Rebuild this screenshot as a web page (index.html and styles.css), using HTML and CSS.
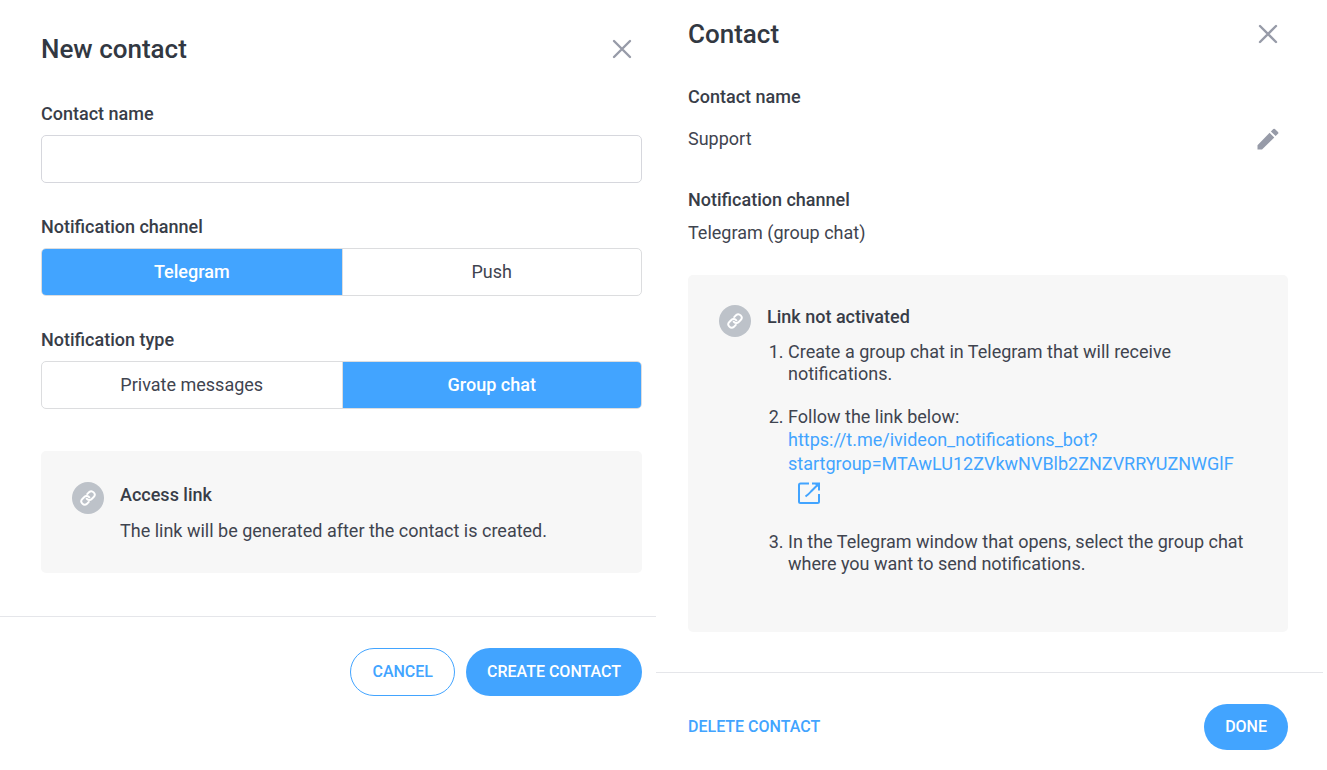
FILE: index.html
```html
<!DOCTYPE html>
<html lang="en">
<head>
<meta charset="utf-8">
<title>Contacts</title>
<link rel="stylesheet" href="styles.css">
</head>
<body>
<svg class="sprite" aria-hidden="true">
  <symbol id="icon-close" viewBox="0 0 24 24">
    <path d="M4 4 20 20M20 4 4 20" fill="none" stroke="currentColor" stroke-width="2.400" stroke-linecap="round"/>
  </symbol>
  <symbol id="icon-link" viewBox="0 0 24 24">
    <path d="M10 13a5 5 0 0 0 7.540.540l3-3a5 5 0 0 0-7.070-7.070l-2.700 2.700M14 11a5 5 0 0 0-7.540-.540l-3 3a5 5 0 0 0 7.070 7.070l2.700-2.700" fill="none" stroke="currentColor" stroke-width="2.900" stroke-linecap="round"/>
  </symbol>
  <symbol id="icon-pencil" viewBox="0 0 24 24">
    <path d="M1.500 18.200V22.500H6L18.300 10.400 13.600 5.800ZM14.900 4.500 19.600 9.100 22 6.700Q22.800 5.900 22 5.100L18.900 2Q18.100 1.300 17.300 2Z" fill="currentColor"/>
  </symbol>
  <symbol id="icon-external" viewBox="0 0 24 24">
    <path d="M12 2.500H3.500Q2 2.500 2 4V20.500Q2 22 3.500 22H20.500Q22 22 22 20.500V13M15 2.500H22V9.500M22 2.500 14 10.500Q12 13 8.500 15.500" fill="none" stroke="currentColor" stroke-width="2"/>
    <path d="M17 2H22.500V7.500Z" fill="currentColor"/>
  </symbol>
</svg>
<main class="screens">
  <form class="panel panel-new">
    <header class="panel-head">
      <h1 class="title">New contact</h1>
      <button class="icon-button" type="button" aria-label="Close"><svg class="icon"><use href="#icon-close"/></svg></button>
    </header>
    <div class="field">
      <label class="label" for="contact-name">Contact name</label>
      <input class="text-input" id="contact-name" type="text">
    </div>
    <div class="field">
      <h2 class="label" id="channel-label">Notification channel</h2>
      <div class="segmented" role="group" aria-labelledby="channel-label">
        <button class="segment segment-active" type="button" aria-pressed="true">Telegram</button>
        <button class="segment" type="button" aria-pressed="false">Push</button>
      </div>
    </div>
    <div class="field">
      <h2 class="label" id="type-label">Notification type</h2>
      <div class="segmented" role="group" aria-labelledby="type-label">
        <button class="segment" type="button" aria-pressed="false">Private messages</button>
        <button class="segment segment-active" type="button" aria-pressed="true">Group chat</button>
      </div>
    </div>
    <section class="notice">
      <span class="badge"><svg class="badge-icon" aria-hidden="true"><use href="#icon-link"/></svg></span>
      <div class="notice-body">
        <h2 class="label">Access link</h2>
        <p class="text">The link will be generated after the contact is created.</p>
      </div>
    </section>
    <footer class="panel-foot">
      <button class="button button-outline" type="button">CANCEL</button>
      <button class="button button-primary" type="submit">CREATE CONTACT</button>
    </footer>
  </form>

  <section class="panel panel-view">
    <header class="panel-head">
      <h1 class="title">Contact</h1>
      <button class="icon-button" type="button" aria-label="Close"><svg class="icon"><use href="#icon-close"/></svg></button>
    </header>
    <div class="detail">
      <h2 class="label">Contact name</h2>
      <div class="detail-row">
        <p class="text">Support</p>
        <button class="icon-button" type="button" aria-label="Edit contact name"><svg class="icon"><use href="#icon-pencil"/></svg></button>
      </div>
    </div>
    <div class="detail">
      <h2 class="label">Notification channel</h2>
      <p class="text">Telegram (group chat)</p>
    </div>
    <section class="notice">
      <span class="badge"><svg class="badge-icon" aria-hidden="true"><use href="#icon-link"/></svg></span>
      <div class="notice-body">
        <h2 class="label">Link not activated</h2>
        <ol class="steps">
          <li class="step">Create a group chat in Telegram that will receive notifications.</li>
          <li class="step">Follow the link below:
            <a class="bot-link" href="#">https://t.me/ivideon_notifications_bot?<wbr>startgroup=MTAwLU12ZVkwNVBlb2ZNZVRRYUZNWGlF<svg class="external" aria-hidden="true"><use href="#icon-external"/></svg></a>
          </li>
          <li class="step">In the Telegram window that opens, select the group chat where you want to send notifications.</li>
        </ol>
      </div>
    </section>
    <footer class="panel-foot">
      <button class="button-text" type="button">DELETE CONTACT</button>
      <button class="button button-primary" type="button">DONE</button>
    </footer>
  </section>
</main>
</body>
</html>
```
FILE: styles.css
```css
* {
  box-sizing: border-box;
}

body {
  margin: 0;
  background: #fff;
  color: #3f444f;
  font-family: Roboto, "Liberation Sans", sans-serif;
  font-size: 18px;
  line-height: 22px;
}

button,
input {
  font: inherit;
  color: inherit;
}

button {
  margin: 0;
  padding: 0;
  border: 0;
  background: none;
  cursor: pointer;
}

h1,
h2,
p {
  margin: 0;
}

.sprite {
  display: none;
}

.screens {
  display: grid;
  grid-template-columns: 656fr 667fr;
  align-items: start;
  padding-right: 4px;
}

.panel {
  display: flex;
  flex-direction: column;
  min-width: 0;
}

.panel-new {
  padding: 33px 14px 0 41px;
}

.panel-view {
  padding: 18px 35px 0 32px;
}

.panel-head,
.detail-row {
  display: flex;
  align-items: center;
  justify-content: space-between;
}

.title {
  color: #323842;
  font-size: 26px;
  line-height: 32px;
  font-weight: 500;
}

.icon-button {
  width: 24px;
  height: 24px;
  margin-right: 8px;
  color: #979ba8;
}

.icon {
  display: block;
  width: 24px;
  height: 24px;
}

.label {
  color: #383d48;
  font-size: 18px;
  line-height: 22px;
  font-weight: 500;
}

.field {
  display: flex;
  flex-direction: column;
  gap: 10px;
}

.panel-new .panel-head {
  margin-bottom: 38px;
}

.field + .field {
  margin-top: 33px;
}

.text-input {
  width: 100%;
  height: 48px;
  padding: 0 16px;
  border: 1px solid #d6d7dd;
  border-radius: 5px;
  background: #fff;
}

.segmented {
  display: grid;
  grid-template-columns: 1fr 1fr;
  height: 48px;
  overflow: hidden;
  border: 1px solid #dcdddf;
  border-radius: 5px;
}

.segment + .segment {
  border-left: 1px solid #dcdddf;
}

.segment-active {
  background: #42a4ff;
  color: #fff;
  font-weight: 500;
}

.notice {
  display: flex;
  gap: 16px;
  padding: 31px 32px 31px 31px;
  border-radius: 5px;
  background: #f7f7f7;
}

.panel-new .notice {
  margin-top: 42px;
}

.badge {
  display: flex;
  flex: none;
  align-items: center;
  justify-content: center;
  width: 32px;
  height: 32px;
  border-radius: 50%;
  background: #bdc2c9;
  color: #fff;
}

.badge-icon {
  width: 16px;
  height: 16px;
}

.notice-body {
  display: flex;
  flex-direction: column;
  gap: 14px;
  min-width: 0;
  padding: 2px 0 0;
}

.panel-foot {
  display: flex;
  align-items: center;
  border-top: 1px solid #e5e6ea;
}

.panel-new .panel-foot {
  justify-content: flex-end;
  gap: 11px;
  margin: 43px -14px 0 -41px;
  padding: 31px 14px 32px 41px;
}

.button,
.button-text {
  font-size: 16px;
  line-height: 20px;
  font-weight: 500;
}

.button {
  height: 48px;
  padding: 0 21px;
  border-radius: 24px;
}

.button-outline {
  border: 1px solid #42a4ff;
  color: #42a4ff;
}

.button-primary {
  background: #42a4ff;
  color: #fff;
}

.button-text {
  color: #42a4ff;
}

.panel-view .panel-head {
  margin-bottom: 36px;
}

.detail {
  display: flex;
  flex-direction: column;
  gap: 11px;
}

.detail:first-of-type {
  gap: 19px;
}

.detail + .detail {
  margin-top: 38px;
}

.panel-view .notice {
  margin-top: 31px;
  padding-top: 30px;
  padding-bottom: 57px;
}

.panel-view .notice-body {
  gap: 13px;
  padding-top: 1px;
}

.steps {
  margin: 0;
  padding-left: 21px;
}

.step + .step {
  margin-top: 21px;
}

.bot-link {
  display: block;
  margin-bottom: 26px;
  color: #42a4ff;
  line-height: 24px;
  text-decoration: none;
}

.external {
  display: block;
  width: 24px;
  height: 24px;
  margin: 5px 0 0 9px;
}

.panel-view .panel-foot {
  justify-content: space-between;
  margin: 40px -35px 0 -32px;
  padding: 31px 35px 20px 32px;
}

.panel-view .button {
  height: 46px;
}
```
